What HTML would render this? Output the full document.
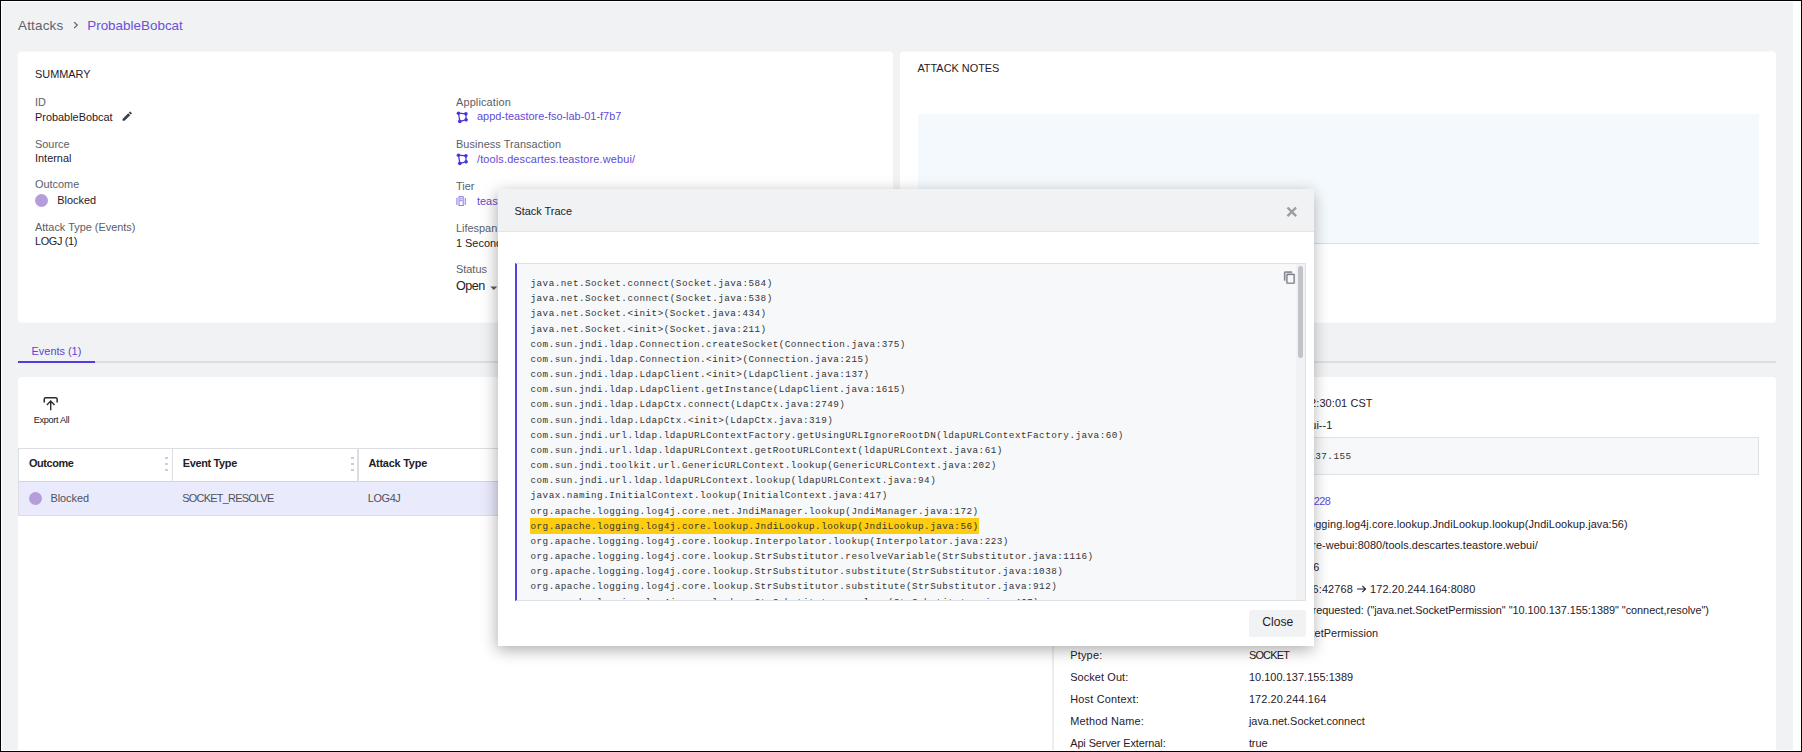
<!DOCTYPE html>
<html><head><meta charset="utf-8">
<style>
*{box-sizing:border-box;margin:0;padding:0}
html,body{width:1802px;height:752px;overflow:hidden;background:#000}
body{font-family:"Liberation Sans",sans-serif;font-size:10.92px;color:#1f2027;position:relative}
.abs{position:absolute}
#page{position:absolute;left:1px;top:1px;width:1800px;height:750px;background:#fff;overflow:hidden}
#bg{position:absolute;left:1px;top:1px;width:1791px;height:748px;background:#f1f2f4}
.panel{position:absolute;background:#fff;border-radius:4px}
.t{position:absolute;white-space:nowrap;line-height:14px;height:14px;transform-origin:0 50%}
.lbl{color:#5b5e68}
.val{color:#1f2027}
.lnk{color:#5f4bd6}
.dot{position:absolute;width:13px;height:13px;border-radius:50%;background:#b39ddb}
pre{font-family:"Liberation Mono",monospace}
.hl{background:#fecc10;padding:2.6px 0.3px 2.6px 1px;margin-left:-1px}
.vd{width:3.6px;height:2px;background:#cdcfd2}
</style></head><body>
<div id="page"><div id="bg"></div>

<!-- breadcrumb -->
<div class="t" style="left:17px;top:17px;font-size:13.44px;letter-spacing:0.2px;line-height:16px;height:16px;color:#5f626b">Attacks</div>
<svg class="abs" style="left:70.7px;top:19.2px" width="8" height="10" viewBox="0 0 8 10"><path d="M2.1 2.1 L5.2 5.1 L2.1 8.1" fill="none" stroke="#5f626b" stroke-width="1.3"/></svg>
<div class="t" style="left:86.2px;top:17px;font-size:13.44px;line-height:16px;height:16px;color:#6b50d9">ProbableBobcat</div>

<!-- summary panel -->
<div class="panel" style="left:17px;top:51px;width:875px;height:270px;box-shadow:0 -1px 0 #f8f9fa,0 1px 0 #f9fafb,-1px 0 0 #f5f6f7"></div>
<div class="t val" style="left:34px;top:66px">SUMMARY</div>
<div class="t lbl" style="left:34px;top:94px">ID</div>
<div class="t val" style="left:34px;top:109px">ProbableBobcat</div>
<svg class="abs" style="left:120.3px;top:109.4px" width="12.4" height="12.4" viewBox="0 0 24 24"><path fill="#3a3c44" d="M3 17.25V21h3.75L17.81 9.94l-3.75-3.75L3 17.25zM20.71 7.04a1 1 0 0 0 0-1.41l-2.34-2.34a1 1 0 0 0-1.41 0l-1.83 1.83 3.75 3.75 1.83-1.83z"/></svg>
<div class="t lbl" style="left:34px;top:136px">Source</div>
<div class="t val" style="left:34px;top:150px">Internal</div>
<div class="t lbl" style="left:34px;top:176.1px">Outcome</div>
<div class="dot" style="left:34px;top:193px"></div>
<div class="t val" style="left:56.3px;top:192px">Blocked</div>
<div class="t lbl" style="left:34px;top:219.1px">Attack Type (Events)</div>
<div class="t val" style="left:34px;top:232.9px;letter-spacing:-0.35px">LOGJ (1)</div>

<div class="t lbl" style="left:455px;top:93.5px;letter-spacing:0.15px">Application</div>
<div class="t lnk" style="left:476px;top:108px">appd-teastore-fso-lab-01-f7b7</div>
<div class="t lbl" style="left:455px;top:136px;letter-spacing:0.07px">Business Transaction</div>
<div class="t lnk" style="left:476px;top:150.5px;letter-spacing:0.15px">/tools.descartes.teastore.webui/</div>
<div class="t lbl" style="left:455px;top:178px">Tier</div>
<div class="t lnk" style="left:476px;top:192.5px">teastore-webui</div>
<div class="t lbl" style="left:455px;top:219.5px">Lifespan</div>
<div class="t val" style="left:455px;top:234.5px">1 Second</div>
<div class="t lbl" style="left:455px;top:260.5px">Status</div>
<div class="t val" style="left:455px;top:277px;font-size:12.6px;letter-spacing:-0.5px;line-height:16px;height:16px">Open</div>


<svg class="abs appi" style="left:454.6px;top:110.2px" width="12.4" height="12.4" viewBox="0 0 13 13"><g fill="none" stroke="#4a35d8" stroke-width="1.300"><path d="M2.600 2.300 L10.400 3 L10.600 9.300 L4 10.900 Z"/></g><g fill="#4a35d8"><circle cx="2.600" cy="2.300" r="1.900"/><circle cx="10.400" cy="3" r="1.900"/><circle cx="10.600" cy="9.300" r="1.900"/><circle cx="4" cy="10.900" r="1.900"/></g></svg>
<svg class="abs appi" style="left:454.6px;top:152.4px" width="12.4" height="12.4" viewBox="0 0 13 13"><g fill="none" stroke="#4a35d8" stroke-width="1.300"><path d="M2.600 2.300 L10.400 3 L10.600 9.300 L4 10.900 Z"/></g><g fill="#4a35d8"><circle cx="2.600" cy="2.300" r="1.900"/><circle cx="10.400" cy="3" r="1.900"/><circle cx="10.600" cy="9.300" r="1.900"/><circle cx="4" cy="10.900" r="1.900"/></g></svg>
<svg class="abs" style="left:454.6px;top:195.1px" width="10.4" height="10.4" viewBox="0 0 11 11"><g fill="none" stroke="#7b6be0" stroke-width="1"><path d="M1 2 V9.500 M9.800 2 V9.500"/><rect x="3.200" y="0.800" width="4.400" height="9.400"/><path d="M4.200 3 H6.600 M4.200 5 H6.600"/></g></svg>
<svg class="abs" style="left:489px;top:284.500px" width="8" height="5" viewBox="0 0 8 5"><path d="M0.300 0.500 H7.300 L3.800 4 Z" fill="#5b5e68"/></svg>

<!-- attack notes -->
<div class="panel" style="left:899px;top:51px;width:876px;height:270px;box-shadow:0 -1px 0 #f8f9fa,0 1px 0 #f9fafb"></div>
<div class="t val" style="left:916.4px;top:60px">ATTACK NOTES</div>
<div class="abs" style="left:916.6px;top:112.6px;width:841.3px;height:130.4px;background:#f4f9fe;border-bottom:1.2px solid #d9dce2"></div>

<!-- tabs -->
<div class="abs" style="left:17px;top:360px;width:1758px;height:2px;background:#dcdee2"></div>
<div class="abs" style="left:17px;top:360px;width:77px;height:2px;background:#523cdd"></div>
<div class="t" style="left:30.6px;top:343.3px;color:#5a45d6">Events (1)</div>

<!-- events panel -->
<div class="panel" style="left:17px;top:376px;width:1758px;height:373px;border-radius:4px 4px 0 0"></div>
<div class="abs" style="left:1051px;top:376px;width:2px;height:373px;background:#ecedf1"></div>


<svg class="abs" style="left:41.8px;top:394.6px" width="15.4" height="15" viewBox="0 0 15.4 15"><g fill="none" stroke="#2a2b31" stroke-width="1.5"><path d="M1.25 6.6 V3.2 Q1.25 1.75 2.7 1.75 H12.7 Q14.15 1.75 14.15 3.2 V6.6"/><path d="M7.7 14.2 V5.4 M3.9 8.9 L7.7 5.1 L11.5 8.9" stroke-width="1.4"/></g></svg>
<div class="t val" style="left:32.70px;top:412.30px;letter-spacing:-0.340px;font-size:9.2px">Export All</div>
<div class="abs" style="left:17px;top:447.3px;width:481px;height:1.2px;background:#dcdee3"></div>
<div class="abs" style="left:17px;top:447.3px;width:1.2px;height:67.5px;background:#dcdee3"></div>
<div class="abs" style="left:17.6px;top:480.3px;width:481px;height:34.7px;background:#e9eafc;border-top:1.2px solid #d3d4dc;border-bottom:1.2px solid #dcdde6"></div>
<div class="abs" style="left:171px;top:448px;width:1.4px;height:32.5px;background:#dcdee3"></div>
<div class="abs" style="left:356.3px;top:448px;width:1.4px;height:32.5px;background:#dcdee3"></div>
<div class="t val" style="left:27.90px;top:455.0px;letter-spacing:-0.37px;font-weight:bold">Outcome</div>
<div class="t val" style="left:181.80px;top:455.0px;letter-spacing:-0.33px;font-weight:bold">Event Type</div>
<div class="t val" style="left:367.40px;top:455.0px;letter-spacing:-0.22px;font-weight:bold">Attack Type</div>
<div class="abs vd" style="left:163.8px;top:455.8px"></div><div class="abs vd" style="left:163.8px;top:461.8px"></div><div class="abs vd" style="left:163.8px;top:467.8px"></div><div class="abs vd" style="left:349.6px;top:455.8px"></div><div class="abs vd" style="left:349.6px;top:461.8px"></div><div class="abs vd" style="left:349.6px;top:467.8px"></div>
<div class="dot" style="left:28px;top:490.6px;width:13.4px;height:13.4px"></div>
<div class="t val" style="left:49.50px;top:489.90px;letter-spacing:-0.050px;color:#4f5159">Blocked</div>
<div class="t val" style="left:181.30px;top:489.60px;letter-spacing:-0.74px;color:#4f5159">SOCKET_RESOLVE</div>
<div class="t val" style="left:366.80px;top:489.60px;letter-spacing:-0.400px;color:#4f5159">LOG4J</div>
<div id="det">
<div class="t val" style="right:428.38px;top:395.10px;letter-spacing:0.120px">12/16/2021 02:30:01 CST</div>
<div class="t val" style="right:468.80px;top:416.80px">teastore-webui--1</div>
<div class="abs" style="left:1247.8px;top:436.3px;width:510.3px;height:37.6px;background:#f7f8fa;border:1px solid #dfe1e6"></div>
<pre class="abs" style="right:449.42px;top:448.6px;font-size:9.3px;letter-spacing:0.476px;line-height:14px;color:#333">10.100.137.155</pre>
<div class="t lnk" style="right:470.90px;top:492.90px;letter-spacing:-0.600px">CVE-2021-44228</div>
<div class="t val" style="right:173.32px;top:515.60px;letter-spacing:0.083px">org.apache.logging.log4j.core.lookup.JndiLookup.lookup(JndiLookup.java:56)</div>
<div class="t val" style="right:263.23px;top:537.30px;letter-spacing:0.068px">host=teastore-webui:8080/tools.descartes.teastore.webui/</div>
<div class="t val" style="right:481.80px;top:559.10px">12346</div>
<div class="t val" style="right:325.58px;top:580.80px;letter-spacing:0.119px">172.20.1.6:42768 <svg style="display:inline-block;vertical-align:middle;position:relative;top:-0.9px" width="10.9" height="8" viewBox="0 0 10.9 8"><path d="M1.1 4 H9.6 M6.3 0.8 L9.6 4 L6.3 7.2" fill="none" stroke="#1f2027" stroke-width="1.05"/></svg> 172.20.244.164:8080</div>
<div class="t val" style="right:92.05px;top:602.30px;letter-spacing:-0.035px">Permission requested: ("java.net.SocketPermission" "10.100.137.155:1389" "connect,resolve")</div>
<div class="t val" style="right:422.86px;top:625.10px;letter-spacing:0.045px">java.net.SocketPermission</div>
<div class="t val" style="left:1069.20px;top:646.50px;letter-spacing:0.220px">Ptype:</div>
<div class="t val" style="left:1247.90px;top:646.50px;letter-spacing:-0.780px">SOCKET</div>
<div class="t val" style="left:1069.20px;top:669.00px;letter-spacing:0.110px">Socket Out:</div>
<div class="t val" style="left:1247.90px;top:669.00px;letter-spacing:0.061px">10.100.137.155:1389</div>
<div class="t val" style="left:1069.20px;top:690.60px;letter-spacing:0.208px">Host Context:</div>
<div class="t val" style="left:1247.90px;top:690.60px;letter-spacing:0.115px">172.20.244.164</div>
<div class="t val" style="left:1069.20px;top:713.30px;letter-spacing:0.191px">Method Name:</div>
<div class="t val" style="left:1247.90px;top:713.30px">java.net.Socket.connect</div>
<div class="t val" style="left:1069.20px;top:734.90px;letter-spacing:-0.079px">Api Server External:</div>
<div class="t val" style="left:1247.90px;top:734.90px;letter-spacing:-0.067px">true</div>
</div>

<!-- modal -->
<div id="modal" class="abs" style="left:497px;top:188px;width:816px;height:456.5px;background:#fff;border-radius:3px 3px 0 0;box-shadow:-1px 4px 16px rgba(0,0,0,.32)">
 <div class="abs" style="left:0;top:0;width:816px;height:42.8px;background:#f1f2f4;border-bottom:1.6px solid #e3e5e9;border-radius:3px 3px 0 0"></div>
 <div class="abs" style="left:0;top:0.5px;width:816px;height:456px">
 <div class="t val" style="left:16.5px;top:14.5px">Stack Trace</div>

 <div id="code" class="abs" style="left:17px;top:73.8px;width:791px;height:337.7px;background:#f7f8fa;border:1px solid #dfe1e6;border-left:2px solid #5342de;overflow:hidden">
<pre id="pre" style="position:absolute;left:13.5px;top:11.7px;font-size:9.3px;letter-spacing:0.476px;line-height:15.17px;color:#333">java.net.Socket.connect(Socket.java:584)
java.net.Socket.connect(Socket.java:538)
java.net.Socket.&lt;init&gt;(Socket.java:434)
java.net.Socket.&lt;init&gt;(Socket.java:211)
com.sun.jndi.ldap.Connection.createSocket(Connection.java:375)
com.sun.jndi.ldap.Connection.&lt;init&gt;(Connection.java:215)
com.sun.jndi.ldap.LdapClient.&lt;init&gt;(LdapClient.java:137)
com.sun.jndi.ldap.LdapClient.getInstance(LdapClient.java:1615)
com.sun.jndi.ldap.LdapCtx.connect(LdapCtx.java:2749)
com.sun.jndi.ldap.LdapCtx.&lt;init&gt;(LdapCtx.java:319)
com.sun.jndi.url.ldap.ldapURLContextFactory.getUsingURLIgnoreRootDN(ldapURLContextFactory.java:60)
com.sun.jndi.url.ldap.ldapURLContext.getRootURLContext(ldapURLContext.java:61)
com.sun.jndi.toolkit.url.GenericURLContext.lookup(GenericURLContext.java:202)
com.sun.jndi.url.ldap.ldapURLContext.lookup(ldapURLContext.java:94)
javax.naming.InitialContext.lookup(InitialContext.java:417)
org.apache.logging.log4j.core.net.JndiManager.lookup(JndiManager.java:172)
<span class="hl">org.apache.logging.log4j.core.lookup.JndiLookup.lookup(JndiLookup.java:56)</span>
org.apache.logging.log4j.core.lookup.Interpolator.lookup(Interpolator.java:223)
org.apache.logging.log4j.core.lookup.StrSubstitutor.resolveVariable(StrSubstitutor.java:1116)
org.apache.logging.log4j.core.lookup.StrSubstitutor.substitute(StrSubstitutor.java:1038)
org.apache.logging.log4j.core.lookup.StrSubstitutor.substitute(StrSubstitutor.java:912)
org.apache.logging.log4j.core.lookup.StrSubstitutor.replace(StrSubstitutor.java:467)</pre>
  <div class="abs" style="left:779.4px;top:0;width:9px;height:337px;background:#f1f2f4"></div><div class="abs" style="left:781.4px;top:1.5px;width:4.6px;height:92.6px;background:#c1c3c8;border-radius:2.3px"></div>
  <svg class="abs" style="left:765.6px;top:6.6px" width="13.4" height="13.4" viewBox="0 0 24 24"><path fill="#7d7f86" stroke="#7d7f86" stroke-width="0.6" d="M16 1H4c-1.1 0-2 .9-2 2v14h2V3h12V1zm3 4H8c-1.1 0-2 .9-2 2v14c0 1.100.9 2 2 2h11c1.100 0 2-.9 2-2V7c0-1.100-.9-2-2-2zm0 16H8V7h11v14z"/></svg>
 </div>
 <svg class="abs" style="left:788.1px;top:16.4px" width="11.6" height="11.6" viewBox="0 0 11.6 11.6"><path d="M1.5 1.5 L10.1 10.1 M10.1 1.5 L1.5 10.1" stroke="#9b9da4" stroke-width="2.4" fill="none"/></svg>
 <div class="abs" style="left:750.7px;top:420.4px;width:56.9px;height:27.4px;background:#f1f2f4;border-radius:2.5px"></div>
 <div class="t val" style="left:764.3px;top:424.9px;font-size:12.1px;line-height:16px;height:16px">Close</div>
 </div>
</div>

</div>
</body></html>
